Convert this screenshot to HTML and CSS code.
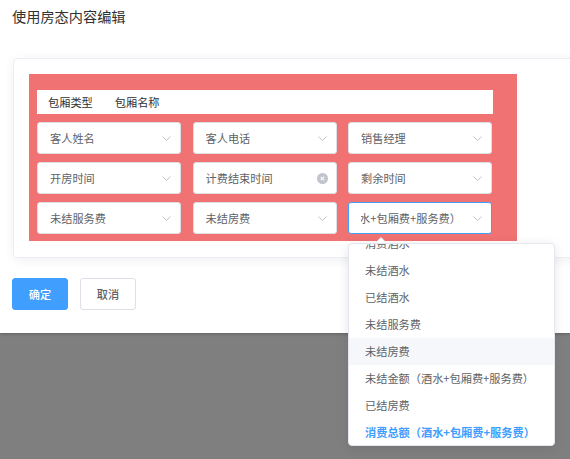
FILE: index.html
```html
<!DOCTYPE html>
<html lang="zh-CN">
<head>
<meta charset="utf-8">
<title>使用房态内容编辑</title>
<link rel="stylesheet" href="styles.css">
</head>
<body>
<div class="page">
  <div class="title">使用房态内容编辑</div>
  <div class="card">
    <div class="board">
      <div class="bar"><span>包厢类型</span><span>包厢名称</span></div>
      <div class="grid">
        <div class="select"><span class="val">客人姓名</span><svg class="chev" viewBox="0 0 9 5"><polyline points="0.5,0.5 4.5,4.5 8.5,0.5"/></svg></div>
        <div class="select"><span class="val">客人电话</span><svg class="chev" viewBox="0 0 9 5"><polyline points="0.5,0.5 4.5,4.5 8.5,0.5"/></svg></div>
        <div class="select"><span class="val">销售经理</span><svg class="chev" viewBox="0 0 9 5"><polyline points="0.5,0.5 4.5,4.5 8.5,0.5"/></svg></div>
        <div class="select"><span class="val">开房时间</span><svg class="chev" viewBox="0 0 9 5"><polyline points="0.5,0.5 4.5,4.5 8.5,0.5"/></svg></div>
        <div class="select"><span class="val">计费结束时间</span><span class="clear"></span></div>
        <div class="select"><span class="val">剩余时间</span><svg class="chev" viewBox="0 0 9 5"><polyline points="0.5,0.5 4.5,4.5 8.5,0.5"/></svg></div>
        <div class="select"><span class="val">未结服务费</span><svg class="chev" viewBox="0 0 9 5"><polyline points="0.5,0.5 4.5,4.5 8.5,0.5"/></svg></div>
        <div class="select"><span class="val">未结房费</span><svg class="chev" viewBox="0 0 9 5"><polyline points="0.5,0.5 4.5,4.5 8.5,0.5"/></svg></div>
        <div class="select focus"><span class="val end"><span>消费总额（酒水+包厢费+服务费）</span></span><svg class="chev" viewBox="0 0 9 5"><polyline points="0.5,0.5 4.5,4.5 8.5,0.5"/></svg></div>
      </div>
    </div>
  </div>
  <div class="actions">
    <button class="btn primary">确定</button>
    <button class="btn">取消</button>
  </div>
</div>
<div class="dropdown">
  <div class="arrow"></div>
  <div class="scroll">
    <ul class="list">
      <li>消费酒水</li>
      <li>未结酒水</li>
      <li>已结酒水</li>
      <li>未结服务费</li>
      <li class="hover">未结房费</li>
      <li>未结金额（酒水+包厢费+服务费）</li>
      <li>已结房费</li>
      <li class="selected">消费总额（酒水+包厢费+服务费）</li>
    </ul>
  </div>
</div>
</body>
</html>
```
FILE: styles.css
```css
* { box-sizing: border-box; }
html, body { margin: 0; padding: 0; }
body {
  width: 570px;
  height: 459px;
  overflow: hidden;
  position: relative;
  background: #7f7f7f;
  font-family: "Noto Sans CJK SC", "Noto Sans", sans-serif;
  color: #606266;
}
.page {
  height: 333px;
  background: #fff;
  padding: 6px 0 0 12px;
  box-shadow: 0 1px 3px rgba(0,0,0,0.25);
}
.title {
  font-size: 14.2px;
  line-height: 20px;
  color: #303133;
}
.card {
  margin: 32px 0 0 1px;
  width: 620px;
  border: 1px solid #ebeef5;
  border-radius: 4px;
  padding: 15px 15px 16px;
  box-shadow: 0 2px 12px rgba(0,0,0,0.06);
  background: #fff;
}
.board {
  width: 488px;
  background: #f07272;
  padding: 16px 24px 7px 8px;
}
.bar {
  height: 24px;
  background: #fff;
  display: flex;
  align-items: center;
  gap: 22px;
  padding-left: 11px;
  font-size: 11.2px;
  color: #303133;
}
.grid {
  margin-top: 8px;
  display: grid;
  grid-template-columns: repeat(3, 144px);
  column-gap: 11.5px;
  row-gap: 8px;
}
.select {
  position: relative;
  height: 32px;
  background: #fff;
  border: 1px solid #dcdfe6;
  border-radius: 3px;
  padding: 0 30px 0 12px;
  display: flex;
  align-items: center;
  font-size: 11.2px;
  color: #606266;
}
.select.focus { border-color: #409eff; }
.val {
  white-space: nowrap;
  overflow: hidden;
  flex: 1;
  display: flex;
}
.val.end { justify-content: flex-end; }
.val.end span { flex-shrink: 0; }
.chev {
  position: absolute;
  right: 9px;
  top: 13px;
  width: 9px;
  height: 5px;
  overflow: visible;
}
.chev polyline {
  fill: none;
  stroke: #c0c4cc;
  stroke-width: 1;
}
.clear {
  position: absolute;
  right: 8px;
  top: 10px;
  width: 11px;
  height: 11px;
  border-radius: 50%;
  background: #c0c4cc;
}
.clear::before, .clear::after {
  content: "";
  position: absolute;
  left: 5px;
  top: 3px;
  width: 1.2px;
  height: 5px;
  background: #fff;
  transform: rotate(45deg);
}
.clear::after { transform: rotate(-45deg); }
.actions {
  margin-top: 20px;
  display: flex;
  gap: 12px;
}
.btn {
  width: 56px;
  height: 32px;
  border: 1px solid #dcdfe6;
  border-radius: 3px;
  background: #fff;
  color: #606266;
  font-family: inherit;
  font-size: 11.2px;
  font-weight: 500;
  padding: 0;
}
.btn.primary {
  background: #409eff;
  border-color: #409eff;
  color: #fff;
}
.dropdown {
  position: absolute;
  left: 348px;
  top: 243px;
  width: 207px;
  height: 203px;
  background: #fff;
  border: 1px solid #e4e7ed;
  border-radius: 4px;
  box-shadow: 0 2px 12px rgba(0,0,0,0.1);
}
.arrow {
  position: absolute;
  left: 26px;
  top: -7px;
  width: 0;
  height: 0;
  border-left: 6px solid transparent;
  border-right: 6px solid transparent;
  border-bottom: 6px solid #ebeef5;
}
.arrow::after {
  content: "";
  position: absolute;
  left: -5px;
  top: 1px;
  border-left: 5px solid transparent;
  border-right: 5px solid transparent;
  border-bottom: 5px solid #fff;
}
.scroll {
  height: 100%;
  overflow: hidden;
  border-radius: 4px;
}
.list {
  list-style: none;
  margin: -14px 0 0;
  padding: 0;
}
.list li {
  height: 27px;
  line-height: 27px;
  padding: 0 16px;
  font-size: 11.2px;
  color: #606266;
  white-space: nowrap;
}
.list li.hover { background: #f5f7fa; }
.list li.selected { color: #409eff; font-weight: 700; }
```
